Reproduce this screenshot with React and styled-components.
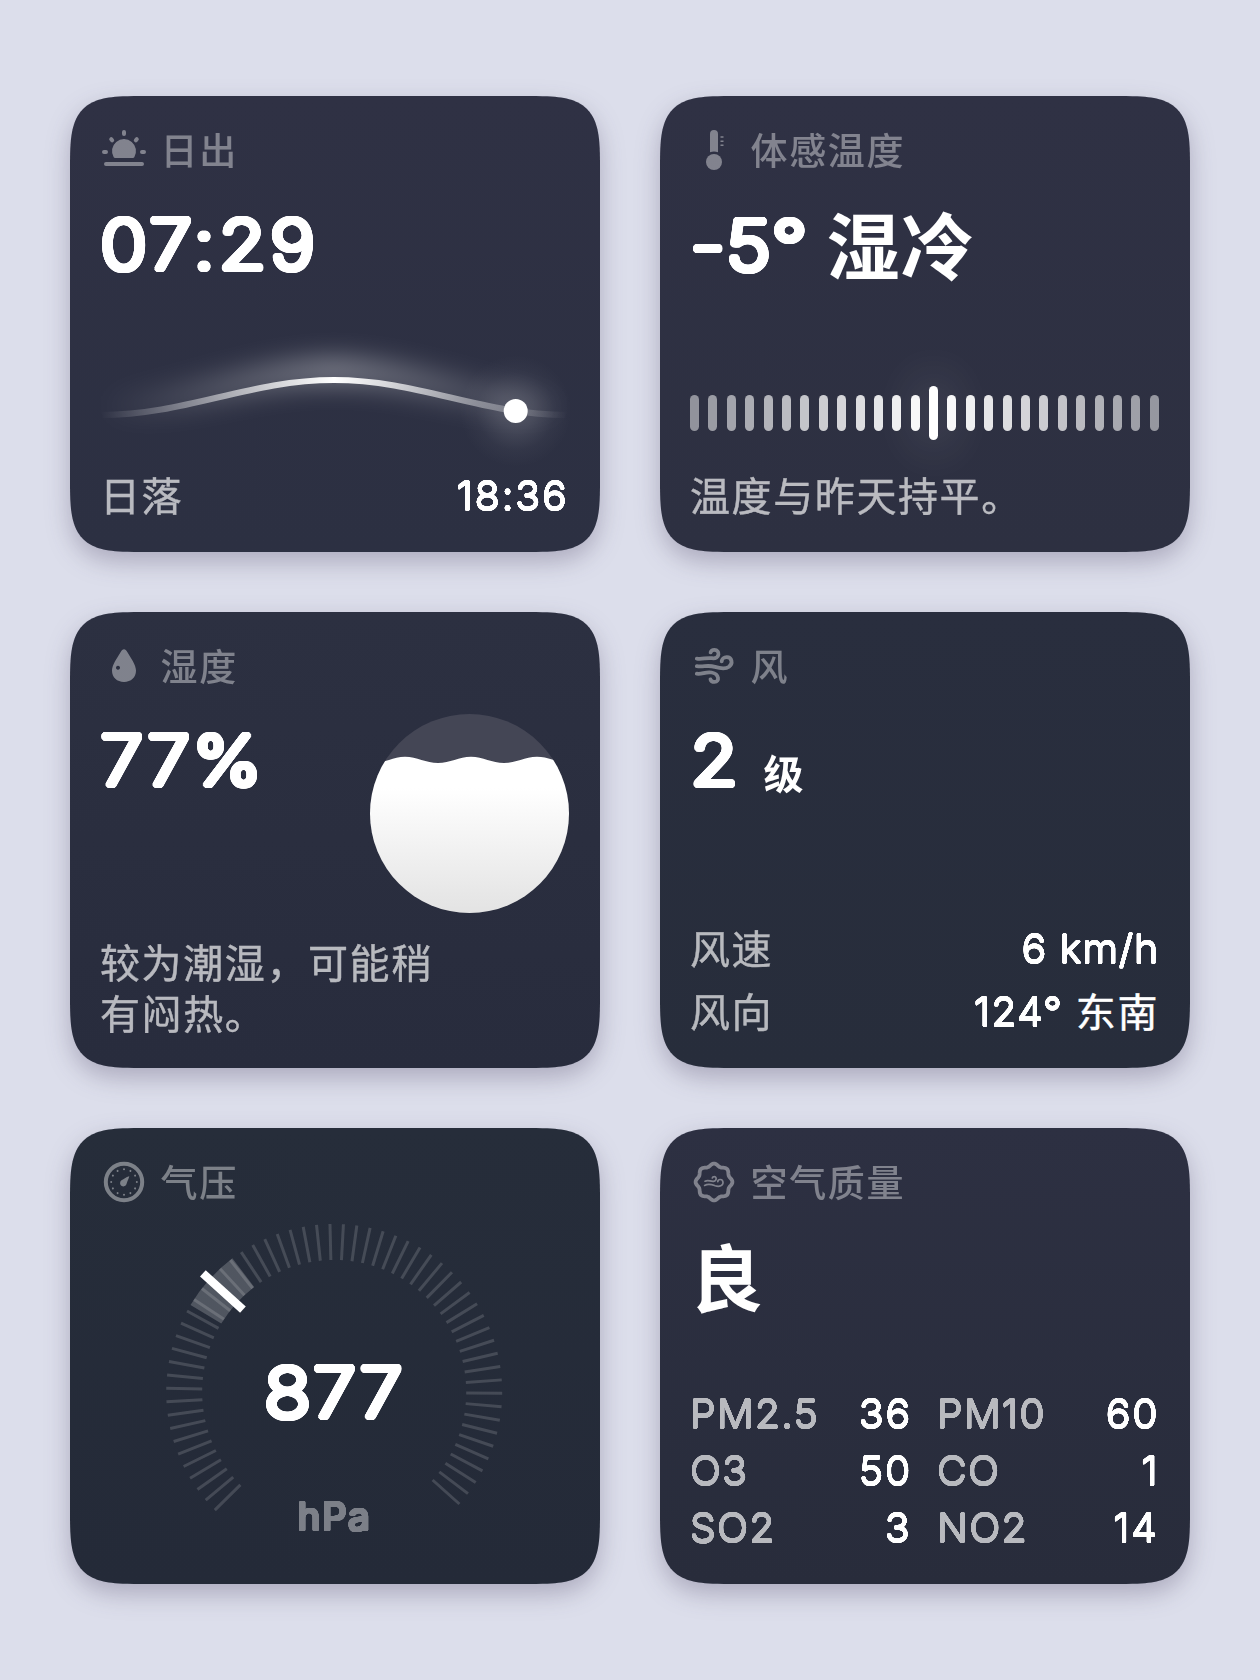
import styled, { createGlobalStyle } from "styled-components";

const GlobalStyle = createGlobalStyle`
  * {
    box-sizing: border-box;
  }
  body {
    margin: 0;
    background-color: #dcdeeb;
    font-family: "Inter", "Noto Sans CJK SC", sans-serif;
    font-optical-sizing: none;
    color: #fff;
  }
`;

const WIDTH = 530;
const HEIGHT = 456;

// card outline, superellipse corners
const outline = (w, h, a, n) => {
  const steps = 40;
  const quarter = Array.from({ length: steps + 1 }, (_, i) => {
    const t = (i / steps) * (Math.PI / 2);
    return [
      a * (1 - Math.pow(Math.cos(t), 2 / n)),
      a * (1 - Math.pow(Math.sin(t), 2 / n)),
    ];
  });
  const back = [...quarter].reverse();
  const points = [
    ...quarter.map(([x, y]) => [x, y]),
    ...back.map(([x, y]) => [w - x, y]),
    ...quarter.map(([x, y]) => [w - x, h - y]),
    ...back.map(([x, y]) => [x, h - y]),
  ];
  return `M${points.map(([x, y]) => `${x.toFixed(2)} ${y.toFixed(2)}`).join("L")}Z`;
};

const softEdge = (r) =>
  Array.from({ length: 32 }, (_, i) => {
    const t = (i / 32) * Math.PI * 2;
    return `${(r * Math.cos(t)).toFixed(2)}px ${(r * Math.sin(t)).toFixed(2)}px 0 #fff`;
  }).join(",");

const Page = styled.main`
  display: grid;
  grid-template-columns: ${WIDTH}px ${WIDTH}px;
  grid-auto-rows: ${HEIGHT}px;
  gap: 60px;
  width: 1260px;
  height: 1680px;
  padding: 96px 70px;
`;

const Shadow = styled.section`
  filter: drop-shadow(0 10px 12px rgba(50, 40, 75, 0.28));
`;

const Surface = styled.div`
  display: flex;
  flex-direction: column;
  width: 100%;
  height: 100%;
  padding: 34px 31px 30px 30px;
  background: linear-gradient(${(p) => p.$from}, ${(p) => p.$to});
  clip-path: path("${outline(WIDTH, HEIGHT, 78, 3.8)}");
`;

const Header = styled.header`
  display: flex;
  align-items: center;
  gap: 13.6px;
  height: 40px;
  padding-left: 1px;
  opacity: 0.4;
`;

const Icon = styled.svg`
  flex: none;
  width: 46px;
  height: 46px;
  overflow: visible;
  fill: none;
  stroke-linecap: round;
  stroke-linejoin: round;
`;

const Title = styled.h2`
  margin: 4px 0 0;
  font-size: 37px;
  font-weight: 500;
  line-height: 40px;
  letter-spacing: 1.6px;
`;

const Big = styled.div`
  display: flex;
  align-items: baseline;
  height: 80px;
  margin-top: 34px;
  font-size: 73px;
  font-weight: 700;
  line-height: 80px;
  white-space: pre;
`;

const Word = styled.span`
  position: relative;
  top: 4px;
  margin-left: ${(p) => p.$gap || "0"};
  letter-spacing: 1px;
`;

// thin glyphs thickened evenly on every side, so that the ends come out round
const BigNum = styled.span`
  display: inline-block;
  padding-left: ${(p) => (p.$center ? "0" : "0.6px")};
  font-size: 68px;
  font-weight: 200;
  letter-spacing: ${(p) => p.$spacing || "0"};
  text-shadow: ${softEdge(3.2)}, ${softEdge(1.6)};
  transform: scaleX(1.12);
  transform-origin: ${(p) => (p.$center ? "center" : "left")};
`;

const Num = styled.span`
  display: inline-block;
  position: relative;
  top: -1px;
  font-size: 39.2px;
  font-weight: 300;
  line-height: 1;
  letter-spacing: ${(p) => p.$spacing || "1.3px"};
  text-shadow: ${softEdge(0.6)};
  transform: scaleX(1.04);
  transform-origin: ${(p) => (p.$left ? "left" : "right")};
`;

const Level = styled.span`
  position: relative;
  top: 4px;
  margin-left: 31px;
  font-size: 40px;
`;

const Rows = styled.div`
  display: grid;
  grid-template-columns: ${(p) => p.$columns || "1fr"};
  column-gap: 25px;
  row-gap: ${(p) => p.$gap || "0"};
  margin-top: auto;
`;

const Row = styled.div`
  display: flex;
  align-items: baseline;
  justify-content: space-between;
  height: 51px;
  font-size: 40px;
  line-height: 51px;
  letter-spacing: 1.6px;
  white-space: pre;
`;

const Label = styled.span`
  opacity: 0.67;
  -webkit-text-stroke: 0.4px #fff;
`;

const Note = styled.p`
  width: 345px;
  margin: ${(p) => (p.$wrap ? "auto 0 -2px" : "auto 0 0")};
  font-size: 40px;
  line-height: 51px;
  letter-spacing: 1.6px;
  opacity: 0.67;
  white-space: ${(p) => (p.$wrap ? "normal" : "nowrap")};
  -webkit-text-stroke: 0.4px #fff;
`;

const Direction = styled.span`
  -webkit-text-stroke: 0.4px #fff;
`;

const SunPath = styled.svg`
  display: block;
  width: 470px;
  height: 120px;
  margin-top: 52px;
  overflow: visible;
`;

const Scale = styled.div`
  display: flex;
  align-items: center;
  justify-content: space-between;
  height: 54px;
  margin-top: 102px;
`;

const Bar = styled.span`
  width: 9px;
  height: ${(p) => (p.$active ? "54px" : "36px")};
  border-radius: 4.5px;
  background-color: #fff;
  box-shadow: ${(p) => (p.$active ? "0 0 50px 10px rgba(255,255,255,.14)" : "none")};
`;

const Split = styled.div`
  display: flex;
  justify-content: space-between;
`;

const Tank = styled.svg`
  width: 199px;
  height: 199px;
  margin-top: 28px;
`;

const Gauge = styled.div`
  display: grid;
  justify-items: center;
  margin-top: 10px;

  > * {
    grid-area: 1 / 1;
  }
`;

const Dial = styled.svg`
  width: 360px;
  height: 342px;
`;

const Readout = styled.div`
  display: flex;
  flex-direction: column;
  align-items: center;
  padding-top: 140px;
  line-height: 80px;
`;

const Unit = styled.span`
  margin-top: 64px;
  font-size: 38.5px;
  font-weight: 400;
  line-height: 40px;
  text-shadow: ${softEdge(1.3)};
  letter-spacing: 1.6px;
  opacity: 0.4;
`;

const SunriseIcon = () => (
  <Icon viewBox="0 0 46 46" stroke="#fff" strokeWidth="4">
    <path
      d="M12.7 30.2A12 12 0 1 1 33.3 30.2Q32.8 31 31.9 31H14.1Q13.2 31 12.7 30.2Z"
      fill="#fff"
      stroke="none"
    />
    <path d="M23 5v2M10.2 12.2l1 1.1M35.8 12.2l-1 1.1M3 25h2M41 25h2M5 37h36" />
  </Icon>
);

const ThermometerIcon = () => (
  <Icon viewBox="0 0 46 46" fill="#fff">
    <path d="M19 7a4 4 0 0 1 8 0V25.2a10.8 10.8 0 0 0-8 0Z" fill="#fff" />
    <circle cx="23" cy="35" r="8" fill="#fff" />
    <path
      d="M29.5 10h3M29.5 14.2h3M29.5 18.3h3"
      stroke="#fff"
      strokeWidth="1.6"
      strokeLinecap="butt"
    />
  </Icon>
);

const DropIcon = () => (
  <Icon viewBox="0 0 46 46">
    <path
      fill="#fff"
      fillRule="evenodd"
      d="M23 6.3C24.3 6.3 25.3 7.3 26.6 9.4C29.6 14.6 35 21.6 35 27.6C35 34.6 30 39 23 39S11 34.6 11 27.6C11 21.6 16.4 14.6 19.4 9.4C20.7 7.3 21.7 6.3 23 6.3ZM17 22.7a2 2 0 1 0 0.01 0Z"
    />
  </Icon>
);

const WindIcon = () => (
  <Icon viewBox="0 0 46 46" stroke="#fff" strokeWidth="3.8">
    <path d="M5.8 15.6C11 16.5 15.5 14.5 21 15.2C29 16.2 29.4 6.9 23.4 6.9C21.3 6.9 20 8 19.6 9.4" />
    <path d="M5.8 23.2C13 24.2 16.5 21.6 24 23.9C30 25.7 34.8 26 38 23.8C42.4 20.4 40.8 14.2 35.8 14.2C32.8 14.2 30.8 16 30.7 18.3" />
    <path d="M5.8 30.7C11 31.6 14.5 28.4 20.6 29.5C28.4 31 28.8 38.9 23.5 38.9C21.2 38.9 19.9 37.8 19.5 36.4" />
  </Icon>
);

const PressureIcon = () => (
  <Icon viewBox="0 0 46 46">
    <circle cx="23" cy="23" r="18.2" stroke="#fff" strokeWidth="4" />
    {Array.from({ length: 12 }, (_, i) => (
      <circle
        key={i}
        cx="23"
        cy="10.2"
        r="1"
        fill="#fff"
        transform={`rotate(${i * 30} 23 23)`}
      />
    ))}
    <path
      d="M28.2 17.2C28.6 17.6 26.4 22 25.6 24.8A3.3 3.3 0 1 1 20.2 21.6C22 20.2 27.6 16.8 28.2 17.2Z"
      fill="#fff"
    />
  </Icon>
);

const badge = Array.from({ length: 120 }, (_, i) => {
  const t = (i / 120) * Math.PI * 2;
  const r = 17.2 + 1.2 * Math.cos(8 * t);
  return `${(23 + r * Math.sin(t)).toFixed(2)},${(23 - r * Math.cos(t)).toFixed(2)}`;
}).join(" ");

const AirIcon = () => (
  <Icon viewBox="0 0 46 46" stroke="#fff">
    <polygon points={badge} strokeWidth="3.8" />
    <path
      strokeWidth="1.7"
      d="M14 22.2C17.5 20.6 19 22.6 22.6 22.3C26 21.8 25.8 17.6 23.2 17.7C22.2 17.7 21.5 18.3 21.3 19"
    />
    <path
      strokeWidth="1.7"
      d="M13.6 26.4C18 24.2 21 25.6 24.2 26.8C28.6 28.2 32.2 26.4 32 23.4C31.8 19.6 27 19.8 26.8 22.6"
    />
  </Icon>
);

const bars = Array.from({ length: 26 }, (_, i) => {
  if (i === 13) return 1;
  return i < 13 ? 0.48 + i * 0.04 : 0.97 - (i - 14) * 0.043;
});

const TICKS = 59;
const ticks = Array.from({ length: TICKS }, (_, i) => -134.7 + i * 4.595);

const polar = (deg, r) => {
  const t = (deg * Math.PI) / 180;
  return `${(r * Math.sin(t)).toFixed(2)} ${(-r * Math.cos(t)).toFixed(2)}`;
};

const air = [
  ["PM2.5", "36"],
  ["PM10", "60"],
  ["O3", "50"],
  ["CO", "1"],
  ["SO2", "3"],
  ["NO2", "14"],
];

const Card = ({ icon, title, from, to, children }) => (
  <Shadow>
    <Surface $from={from} $to={to}>
      <Header>
        {icon}
        <Title>{title}</Title>
      </Header>
      {children}
    </Surface>
  </Shadow>
);

const CURVE = "M31 319C116 319 179 284 264 284S412 319 497 319";

function App() {
  return (
    <Page>
      <GlobalStyle />
      <Card icon={<SunriseIcon />} title="日出" from="#2f3144" to="#2c3042">
        <Big>
          <BigNum $spacing="3.9px">07:29</BigNum>
        </Big>
        <SunPath viewBox="30 240 470 120">
          <defs>
            <linearGradient id="fade" gradientUnits="userSpaceOnUse" x1="31" x2="497" y1="0" y2="0">
              <stop offset="0" stopColor="#fff" stopOpacity="0" />
              <stop offset="0.5" stopColor="#fff" />
              <stop offset="1" stopColor="#fff" stopOpacity="0" />
            </linearGradient>
            <radialGradient id="halo">
              <stop offset="0" stopColor="#fff" stopOpacity="0.17" />
              <stop offset="0.35" stopColor="#fff" stopOpacity="0.11" />
              <stop offset="0.7" stopColor="#fff" stopOpacity="0.03" />
              <stop offset="1" stopColor="#fff" stopOpacity="0" />
            </radialGradient>
            <filter id="blur" filterUnits="userSpaceOnUse" x="-40" y="200" width="610" height="200">
              <feGaussianBlur stdDeviation="13" />
            </filter>
          </defs>
          <path
            d={CURVE}
            transform="translate(0 -9)"
            fill="none"
            stroke="url(#fade)"
            strokeWidth="26"
            opacity="0.38"
            filter="url(#blur)"
          />
          <circle cx="445.7" cy="315" r="56" fill="url(#halo)" />
          <path d={CURVE} fill="none" stroke="url(#fade)" strokeWidth="6" />
          <circle cx="445.7" cy="315" r="12" fill="#fff" />
        </SunPath>
        <Rows>
          <Row>
            <Label>日落</Label>
            <Num $spacing="2px">18:36</Num>
          </Row>
        </Rows>
      </Card>

      <Card icon={<ThermometerIcon />} title="体感温度" from="#2f3144" to="#2d3041">
        <Big>
          <BigNum $spacing="1.5px">-5°</BigNum>
          <Word $gap="31px">湿冷</Word>
        </Big>
        <Scale>
          {bars.map((opacity, i) => (
            <Bar key={i} $active={i === 13} style={{ opacity }} />
          ))}
        </Scale>
        <Note>温度与昨天持平。</Note>
      </Card>

      <Card icon={<DropIcon />} title="湿度" from="#2c3041" to="#282c3d">
        <Split>
          <Big>
            <BigNum $spacing="3px">77%</BigNum>
          </Big>
          <Tank viewBox="0 0 199 199">
            <defs>
              <linearGradient id="water" x1="0" x2="0" y1="0" y2="1">
                <stop offset="0.2" stopColor="#fff" />
                <stop offset="1" stopColor="#e3e3e3" />
              </linearGradient>
              <clipPath id="tank">
                <circle cx="99.5" cy="99.5" r="99.5" />
              </clipPath>
            </defs>
            <g clipPath="url(#tank)">
              <rect width="199" height="199" fill="#444655" />
              <path
                d="M3 49C15 49 23 42.7 35 42.7S56 49 68 49S89 42.7 101 42.7S122 49 134 49S155 42.7 167 42.7S188 49 200 49V199H0V49Z"
                fill="url(#water)"
              />
            </g>
          </Tank>
        </Split>
        <Note $wrap>较为潮湿，可能稍有闷热。</Note>
      </Card>

      <Card icon={<WindIcon />} title="风" from="#292e3e" to="#272d3b">
        <Big>
          <BigNum>2</BigNum>
          <Level>级</Level>
        </Big>
        <Rows $gap="12px">
          <Row>
            <Label>风速</Label>
            <Num $spacing="1px">6 km/h</Num>
          </Row>
          <Row>
            <Label>风向</Label>
            <Direction>
              <Num>124° </Num>东南
            </Direction>
          </Row>
        </Rows>
      </Card>

      <Card icon={<PressureIcon />} title="气压" from="#262d3a" to="#242a38">
        <Gauge>
          <Dial viewBox="-179.2 -180 360 342">
            {ticks.map((deg) => (
              <line
                key={deg}
                y1="-168"
                y2="-132"
                stroke="#fff"
                strokeOpacity="0.15"
                strokeWidth="3"
                transform={`rotate(${deg})`}
              />
            ))}
            <path
              d={`M${polar(-58.8, 168)}A168 168 0 0 1 ${polar(-37.3, 168)}L${polar(-37.3, 132)}A132 132 0 0 0 ${polar(-58.8, 132)}Z`}
              fill="#fff"
              fillOpacity="0.2"
            />
            <line y1="-177" y2="-123" stroke="#fff" strokeWidth="8.5" transform="rotate(-47.9)" />
          </Dial>
          <Readout>
            <BigNum $center $spacing="2.6px">
              877
            </BigNum>
            <Unit>hPa</Unit>
          </Readout>
        </Gauge>
      </Card>

      <Card icon={<AirIcon />} title="空气质量" from="#2d3042" to="#282c3b">
        <Big>
          <Word>良</Word>
        </Big>
        <Rows $columns="1fr 1fr" $gap="6px">
          {air.map(([name, value]) => (
            <Row key={name}>
              <Label>
                <Num $left>{name}</Num>
              </Label>
              <Num $spacing="1.8px">{value}</Num>
            </Row>
          ))}
        </Rows>
      </Card>
    </Page>
  );
}

export default App;
